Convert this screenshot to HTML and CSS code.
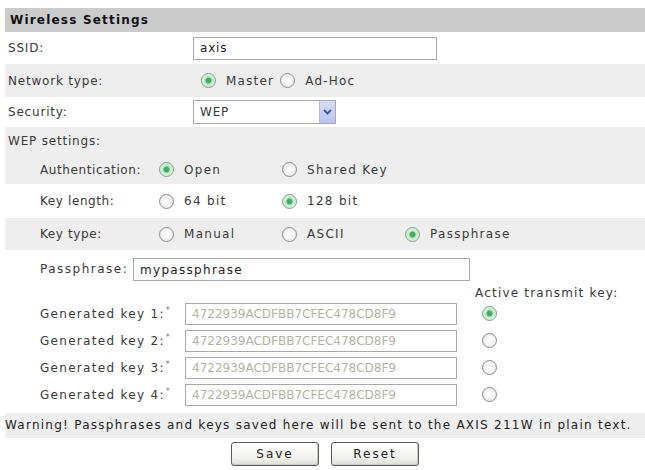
FILE: index.html
```html
<!DOCTYPE html>
<html lang="en">
<head>
    <meta charset="UTF-8">
    <title>Wireless Settings</title>
    <link rel="stylesheet" href="styles.css">
</head>
<body>
    <div class="panel">
        <div class="title">Wireless Settings</div>

        <div class="row ssid-row">
            <span class="label">SSID:</span>
            <input class="text ssid" type="text" value="axis">
        </div>

        <div class="row shade net-row">
            <span class="label">Network type:</span>
            <label class="inline"><input type="radio" name="net" checked> Master</label>
            <label class="inline"><input type="radio" name="net"> Ad-Hoc</label>
        </div>

        <div class="row sec-row">
            <span class="label">Security:</span>
            <div class="select">
                <span>WEP</span>
                <span class="arrow">
                    <svg width="9" height="6" viewBox="0 0 9 6"><path d="M1 1 L4.5 4.5 L8 1" fill="none" stroke="#3b4f9a" stroke-width="1.8"/></svg>
                </span>
            </div>
        </div>

        <div class="shade">
            <div class="row wep-row"><span class="label">WEP settings:</span></div>
            <div class="opt auth-row">
                <span class="sublabel">Authentication:</span>
                <label class="choice"><input type="radio" name="auth" checked> Open</label>
                <label class="choice"><input type="radio" name="auth"> Shared Key</label>
            </div>
        </div>

        <div class="opt len-row">
            <span class="sublabel">Key length:</span>
            <label class="choice"><input type="radio" name="len"> 64 bit</label>
            <label class="choice"><input type="radio" name="len" checked> 128 bit</label>
        </div>

        <div class="opt shade type-row">
            <span class="sublabel">Key type:</span>
            <label class="choice"><input type="radio" name="type"> Manual</label>
            <label class="choice"><input type="radio" name="type"> ASCII</label>
            <label class="choice"><input type="radio" name="type" checked> Passphrase</label>
        </div>

        <div class="pass-row">
            <span class="pass-label">Passphrase:</span>
            <input class="text pass" type="text" value="mypassphrase">
        </div>

        <div class="active-row">Active transmit key:</div>

        <div class="key-row">
            <span class="key-label">Generated key 1:<sup>*</sup></span>
            <input class="text key" type="text" value="4722939ACDFBB7CFEC478CD8F9" readonly>
            <input type="radio" name="active" checked>
        </div>
        <div class="key-row">
            <span class="key-label">Generated key 2:<sup>*</sup></span>
            <input class="text key" type="text" value="4722939ACDFBB7CFEC478CD8F9" readonly>
            <input type="radio" name="active">
        </div>
        <div class="key-row">
            <span class="key-label">Generated key 3:<sup>*</sup></span>
            <input class="text key" type="text" value="4722939ACDFBB7CFEC478CD8F9" readonly>
            <input type="radio" name="active">
        </div>
        <div class="key-row">
            <span class="key-label">Generated key 4:<sup>*</sup></span>
            <input class="text key" type="text" value="4722939ACDFBB7CFEC478CD8F9" readonly>
            <input type="radio" name="active">
        </div>

        <div class="warning">Warning! Passphrases and keys saved here will be sent to the AXIS 211W in plain text.</div>

        <div class="buttons">
            <button class="btn" type="button">Save</button>
            <button class="btn" type="button">Reset</button>
        </div>
    </div>
</body>
</html>
```

FILE: styles.css
```css
* {
    margin: 0;
    padding: 0;
    box-sizing: border-box;
}

body {
    font-family: 'DejaVu Sans', Verdana, sans-serif;
    font-size: 12px;
    letter-spacing: 0.8px;
    color: #3a3a3a;
    background: #fff;
}

.panel {
    margin: 8px 0 0 5px;
}

.title {
    height: 24px;
    line-height: 24px;
    padding-left: 5px;
    background: #cbcbcb;
    color: #111;
    font-weight: bold;
    letter-spacing: 1.2px;
}

.shade {
    background: #eeeeee;
}

.row {
    display: flex;
    align-items: center;
}

.label {
    width: 188px;
    padding-left: 3px;
}

.ssid-row { height: 32px; }
.net-row { height: 33px; }
.sec-row { height: 30px; }
.wep-row { height: 28px; }

input[type="radio"] {
    appearance: none;
    width: 15px;
    height: 15px;
    border-radius: 50%;
    border: 1px solid #8d8d8d;
    background: radial-gradient(circle, #fff 0, #f2f2f2 60%, #dcdcdc 100%);
    flex: none;
}

input[type="radio"]:checked {
    border-color: #7fa08a;
    background: radial-gradient(circle, #3fae5f 0, #3fae5f 2.5px, #bfe9c8 3.5px, #f4fbf5 100%);
}

.inline {
    display: flex;
    align-items: center;
    gap: 10px;
    margin-right: 6px;
    letter-spacing: 1.2px;
}

.net-row .inline:first-of-type {
    margin-left: 8px;
}

.text {
    font-family: inherit;
    font-size: 12px;
    letter-spacing: 0.8px;
    color: #222;
    border: 1px solid #a9a9a9;
    background: #fff;
    padding: 0 6px;
    outline: none;
}

.ssid {
    width: 244px;
    height: 23px;
}

.select {
    width: 143px;
    height: 24px;
    border: 1px solid #a9a9a9;
    display: flex;
    align-items: center;
    justify-content: space-between;
    padding-left: 6px;
}

.arrow {
    width: 16px;
    height: 22px;
    background: linear-gradient(#d6ddf6, #b9c5ee);
    border-left: 1px solid #b0bbe0;
    display: flex;
    align-items: center;
    justify-content: center;
}

.opt {
    display: flex;
    align-items: center;
    padding-left: 35px;
}

.auth-row { height: 29px; }
.len-row { height: 34px; }
.type-row { height: 32px; }

.sublabel {
    width: 119px;
    letter-spacing: 0.6px;
}

.choice {
    width: 123px;
    display: flex;
    align-items: center;
    gap: 10px;
    letter-spacing: 1.3px;
}

.pass-row {
    height: 36px;
    display: flex;
    align-items: flex-start;
    padding: 8px 0 0 35px;
}

.pass-label {
    width: 93px;
    line-height: 23px;
    letter-spacing: 1.5px;
}

.pass {
    width: 337px;
    height: 23px;
    letter-spacing: 1.3px;
}

.active-row {
    height: 14px;
    line-height: 14px;
    padding-left: 470px;
    letter-spacing: 1.2px;
}

.key-row {
    height: 27px;
    display: flex;
    align-items: center;
    padding-left: 35px;
}

.key-label {
    width: 145px;
    letter-spacing: 1.3px;
}

.key-label sup {
    font-size: 8px;
    vertical-align: 5px;
    margin-left: 1px;
    color: #777;
}

.key {
    width: 272px;
    height: 22px;
    color: #b4b4a6;
    letter-spacing: 0;
    margin-right: 25px;
}

.warning {
    margin-top: 5px;
    height: 25px;
    line-height: 25px;
    background: #eeeeee;
    color: #222;
    letter-spacing: 1.25px;
}

.buttons {
    display: flex;
    justify-content: center;
    gap: 12px;
    padding-top: 4px;
}

.btn {
    width: 88px;
    height: 24px;
    font-family: inherit;
    font-size: 12px;
    letter-spacing: 2px;
    color: #222;
    border: 1px solid #5a5a5a;
    border-radius: 3px;
    background: linear-gradient(#ffffff, #f1f1ed 70%, #dcdcd6);
    box-shadow: inset -1px -1px 0 #c8c8c0;
}
```
